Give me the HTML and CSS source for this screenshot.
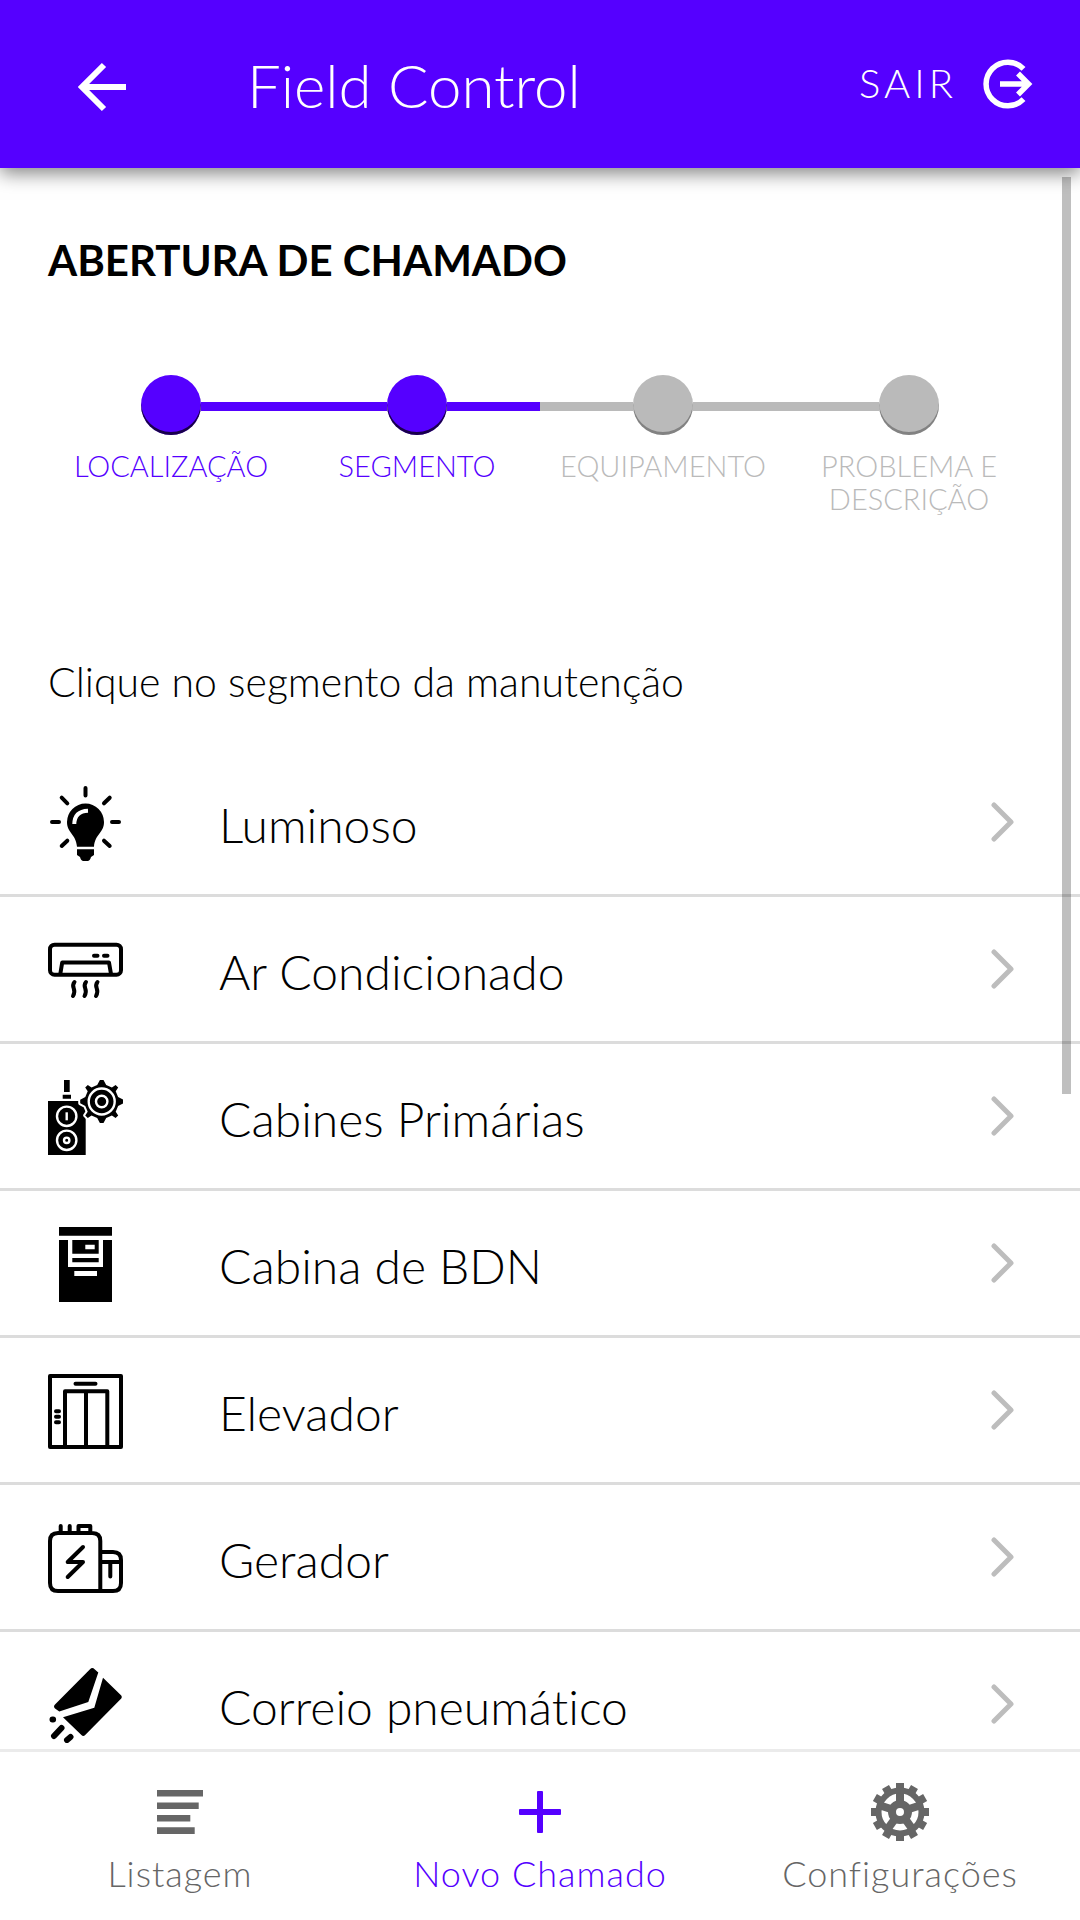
FILE: index.html
```html
<!DOCTYPE html>
<html lang="pt-BR">
<head>
<meta charset="utf-8">
<meta name="viewport" content="width=device-width, initial-scale=1">
<title>Field Control</title>
<link rel="stylesheet" href="styles.css">
</head>
<body>
<header class="topbar">
  <button class="back" type="button" aria-label="Voltar">
    <svg width="60" height="60" viewBox="0 0 60 60" fill="none" stroke="currentColor" stroke-width="6"><path d="M54 30H10M32 8L10 30l22 22"/></svg>
  </button>
  <h1 class="app-title">Field Control</h1>
  <button class="logout" type="button">
    <span>SAIR</span>
    <svg width="50" height="50" viewBox="0 0 50 50" fill="none" stroke="currentColor" stroke-width="5.5"><path d="M40.5 9.8A21.8 21.8 0 1 0 40.5 40.2M17 25H45M35 14.500L45.500 25L35 35.500"/></svg>
  </button>
</header>

<main class="content">
  <h2 class="heading">ABERTURA DE CHAMADO</h2>
  <ol class="steps">
    <li class="step done"><div class="track"><span class="line"></span><span class="dot"></span><span class="line"></span></div><span class="step-label">LOCALIZAÇÃO</span></li>
    <li class="step done"><div class="track"><span class="line"></span><span class="dot"></span><span class="line"></span></div><span class="step-label">SEGMENTO</span></li>
    <li class="step"><div class="track"><span class="line"></span><span class="dot"></span><span class="line"></span></div><span class="step-label">EQUIPAMENTO</span></li>
    <li class="step"><div class="track"><span class="line"></span><span class="dot"></span><span class="line"></span></div><span class="step-label">PROBLEMA E DESCRIÇÃO</span></li>
  </ol>
  <p class="hint">Clique no segmento da manutenção</p>

  <ul class="segments">
    <li><a class="segment" href="#luminoso">
      <svg class="seg-icon" viewBox="0 0 75 75"><path d="M37.500 2V9.500M4 36H11M64 36H71M13.700 11.700L19.300 17.300M61.700 11.700L56 17.300M19.300 54.700L13.700 60M56 54.700L61.700 60" stroke="#000" stroke-width="4" stroke-linecap="round"/><path d="M37.500 17.500A18.500 18.500 0 0 0 19 36C19 47 28 48 29 60.700H46C47 48 56 47 56 36A18.500 18.500 0 0 0 37.500 17.500ZM29 63.300H46V69L43 71Q42 75 39.500 75H35.500Q33 75 32 71L29 69Z"/><path d="M40 24.700C31 25 26.500 30 26.300 38" fill="none" stroke="#fff" stroke-width="4"/></svg>
      <span class="seg-name">Luminoso</span>
      <svg class="chevron" viewBox="0 0 24 40"><path d="M3 3L20 20L3 37"/></svg></a></li>
    <li><a class="segment" href="#ar-condicionado">
      <svg class="seg-icon" viewBox="0 0 75 75" fill="none" stroke="#000" stroke-width="4" stroke-linecap="round" stroke-linejoin="round"><rect x="2" y="11.700" width="71" height="30" rx="4.500"/><path d="M12.300 41L14.200 29.500H61L63 41M46 22.700H49.500M56 22.700H59.500M26.500 49C22 54.500 29.500 56 25 63M38 49C33.500 54.500 41 56 36.500 63M49.500 49C45 54.500 52.500 56 48 63"/></svg>
      <span class="seg-name">Ar Condicionado</span>
      <svg class="chevron" viewBox="0 0 24 40"><path d="M3 3L20 20L3 37"/></svg></a></li>
    <li><a class="segment" href="#cabines-primarias">
      <svg class="seg-icon" viewBox="0 0 75 75"><path d="M16 0H21.700V12H16ZM14.700 14.700H23V18.700H14.700ZM0 21H37.700V75H0Z"/><g fill="none" stroke="#fff" stroke-width="2.400"><circle cx="18.700" cy="36.300" r="9.700"/><circle cx="18.700" cy="60.300" r="9.700"/><circle cx="18.700" cy="60.300" r="2.700"/><path d="M18.700 32.300V40.300"/></g><g transform="translate(53.700 21.500)"><g stroke="#fff" stroke-width="4" stroke-linejoin="round"><path id="cog" d="M-1.800 -21.500H1.800L4.500 -16.400L10.200 -14L13.900 -16.500L16.500 -13.900L14 -10.200L16.400 -4.500L21.500 -1.800V1.800L16.400 4.500L14 10.200L16.500 13.900L13.900 16.500L10.200 14L4.500 16.400L1.800 21.500H-1.800L-4.500 16.400L-10.200 14L-13.900 16.500L-16.500 13.900L-14 10.200L-16.400 4.500L-21.500 1.800V-1.800L-16.400 -4.500L-14 -10.200L-16.500 -13.900L-13.900 -16.500L-10.200 -14L-4.500 -16.400Z"/></g><path d="M-1.800 -21.500H1.800L4.500 -16.400L10.200 -14L13.900 -16.500L16.500 -13.900L14 -10.200L16.400 -4.500L21.500 -1.800V1.800L16.400 4.500L14 10.200L16.500 13.900L13.900 16.500L10.200 14L4.500 16.400L1.800 21.500H-1.800L-4.500 16.400L-10.200 14L-13.900 16.500L-16.500 13.900L-14 10.200L-16.400 4.500L-21.500 1.800V-1.800L-16.400 -4.500L-14 -10.200L-16.500 -13.900L-13.900 -16.500L-10.200 -14L-4.500 -16.400Z"/><circle r="13" fill="none" stroke="#fff" stroke-width="2.400"/><circle r="5.700" fill="none" stroke="#fff" stroke-width="2.400"/></g></svg>
      <span class="seg-name">Cabines Primárias</span>
      <svg class="chevron" viewBox="0 0 24 40"><path d="M3 3L20 20L3 37"/></svg></a></li>
    <li><a class="segment" href="#cabina-bdn">
      <svg class="seg-icon" viewBox="0 0 75 75"><path fill-rule="evenodd" d="M11 0H64V8.700H11ZM11 13H20V40H55V13H64V75H11ZM26.300 44V49H49V44ZM24.300 13H50.700V26.700H24.300ZM37.300 17.700V22.300H46.700V17.700ZM24.300 31H50.700V35.300H24.300Z"/></svg>
      <span class="seg-name">Cabina de BDN</span>
      <svg class="chevron" viewBox="0 0 24 40"><path d="M3 3L20 20L3 37"/></svg></a></li>
    <li><a class="segment" href="#elevador">
      <svg class="seg-icon" viewBox="0 0 75 75" fill="none" stroke="#000" stroke-width="4" stroke-linecap="round" stroke-linejoin="round"><path d="M2 2H73V73H2ZM17 73V17.300H59.300V73M38 17.300V73M27.500 9.700H47.500M8 37.300H11M8 42.800H11M8 48.300H11"/></svg>
      <span class="seg-name">Elevador</span>
      <svg class="chevron" viewBox="0 0 24 40"><path d="M3 3L20 20L3 37"/></svg></a></li>
    <li><a class="segment" href="#gerador">
      <svg class="seg-icon" viewBox="0 0 75 75" fill="none" stroke="#000" stroke-width="4" stroke-linecap="round" stroke-linejoin="round"><path d="M52.300 70H10Q2 70 2 62V20Q2 12 10 12H44.300Q52.300 12 52.300 20V70H65Q73 70 73 62V39Q73 31 65 31H54M54 41H73M62.300 41V55.500M35 26L19.700 41H35L19.700 56M12.700 5V11M21.700 5V11M30.500 11V5H42.300V11"/></svg>
      <span class="seg-name">Gerador</span>
      <svg class="chevron" viewBox="0 0 24 40"><path d="M3 3L20 20L3 37"/></svg></a></li>
    <li><a class="segment" href="#correio-pneumatico">
      <svg class="seg-icon" viewBox="0 0 75 75"><path d="M42 1.200Q44.300 -1 46.600 1.200L50.300 4.500L40.300 34L11.300 43.500L7 40.500Q5 38.600 7 36.600ZM55 9.700L73 27.300Q74.500 29 73 30.800L37.200 67Q35.300 69 33.400 67L15 49.300L46.300 39.700Z"/><path d="M4.500 51.500h.6M13.500 60L6 68M22.500 69L19 72" stroke="#000" stroke-width="6" stroke-linecap="round"/></svg>
      <span class="seg-name">Correio pneumático</span>
      <svg class="chevron" viewBox="0 0 24 40"><path d="M3 3L20 20L3 37"/></svg></a></li>
  </ul>
  <div class="scroll-thumb"></div>
</main>

<nav class="tabs">
  <a class="tab" href="#listagem">
    <svg class="tab-icon" viewBox="0 0 60 60" fill="currentColor"><path d="M7 8H53V14.500H7ZM7 20.500H48.700V27H7ZM7 33H40.300V39.500H7ZM7 45.300H44.700V52H7Z"/></svg>
    <span>Listagem</span></a>
  <a class="tab active" href="#novo-chamado" aria-current="page">
    <svg class="tab-icon" viewBox="0 0 60 60" fill="currentColor"><rect x="9" y="27" width="42" height="6" rx="1"/><rect x="27" y="9" width="6" height="42" rx="1"/></svg>
    <span>Novo Chamado</span></a>
  <a class="tab" href="#configuracoes">
    <svg class="tab-icon" viewBox="0 0 60 60" fill="none" stroke="currentColor"><g transform="translate(30 30)"><g stroke-width="8"><path id="teeth" d="M0 -29V-20M0 29V20"/><use href="#teeth" transform="rotate(30)"/><use href="#teeth" transform="rotate(60)"/><use href="#teeth" transform="rotate(90)"/><use href="#teeth" transform="rotate(120)"/><use href="#teeth" transform="rotate(150)"/><path id="spoke" d="M0 -20V-8"/><use href="#spoke" transform="rotate(72)"/><use href="#spoke" transform="rotate(144)"/><use href="#spoke" transform="rotate(216)"/><use href="#spoke" transform="rotate(288)"/><circle r="8"/></g><circle r="21.500" stroke-width="6"/></g></svg>
    <span>Configurações</span></a>
</nav>
</body>
</html>
```
FILE: styles.css
```css
* { box-sizing: border-box; }

body {
  margin: 0;
  height: 100vh;
  display: flex;
  flex-direction: column;
  font-family: Lato, "Liberation Sans", sans-serif;
  font-weight: 300;
  color: #000;
  background: #fff;
}

button {
  border: 0;
  padding: 0;
  background: none;
  color: inherit;
  font: inherit;
}

a { color: inherit; text-decoration: none; }
ul, ol { list-style: none; margin: 0; padding: 0; }

.topbar {
  flex: none;
  height: 168px;
  display: flex;
  align-items: center;
  padding: 0 47px 0 72px;
  background: #5500ff;
  color: #fff;
  box-shadow: 0 5px 18px rgba(0, 0, 0, .5);
  position: relative;
  z-index: 1;
}

.back { display: flex; padding-top: 6px; }

.app-title {
  flex: 1;
  margin: 0;
  padding: 2px 0 0 115px;
  font-size: 60px;
  line-height: 72px;
  font-weight: 300;
}

.logout {
  display: flex;
  align-items: center;
  gap: 26px;
  font-size: 40px;
  line-height: 48px;
  letter-spacing: 4px;
}

.logout span { padding-bottom: 2px; }

.content {
  flex: 1;
  min-height: 0;
  overflow: hidden;
  position: relative;
}

.heading {
  margin: 0;
  padding: 65px 48px 0;
  font-size: 42px;
  line-height: 54px;
  font-weight: 700;
}

.steps {
  display: grid;
  grid-template-columns: repeat(4, minmax(0, 1fr));
  min-height: 204px;
  margin: 88px 48px 0;
}

.step { color: #bababa; text-align: center; }
.done { color: #5500ff; }
.track { display: flex; align-items: center; height: 63px; }
.line { flex: 1; height: 9px; background: currentColor; }
.step:first-child .line:first-child,
.step:last-child .line:last-child { background: none; }

.dot {
  align-self: flex-start;
  width: 60px;
  height: 60px;
  border-radius: 50%;
  background: currentColor;
  box-shadow: inset 0 -3px 0 rgba(0, 0, 0, .3);
}
.done .dot { box-shadow: inset 0 -3px 0 rgba(0, 0, 0, .7); }

.step-label {
  display: block;
  padding: 11px 12px 0;
  font-size: 29px;
  line-height: 33px;
}

.hint {
  margin: 0;
  padding: 76px 48px 41px;
  font-size: 41px;
  line-height: 54px;
}

.segment {
  display: flex;
  align-items: center;
  height: 147px;
  padding: 0 65px 0 48px;
  border-bottom: 3px solid #dcdcdc;
}

.seg-icon { flex: none; width: 75px; height: 75px; margin-top: 2px; }

.seg-name {
  flex: 1;
  padding: 5px 0 0 96px;
  font-size: 48px;
  line-height: 60px;
  font-variant-ligatures: none;
}

.chevron {
  width: 24px;
  height: 40px;
  fill: none;
  stroke: #bdbdbd;
  stroke-width: 5;
  stroke-linecap: round;
  stroke-linejoin: round;
}

.scroll-thumb {
  position: absolute;
  top: 9px;
  right: 9px;
  width: 9px;
  height: 58%;
  background: rgba(0, 0, 0, .25);
}

.tabs {
  flex: none;
  display: grid;
  grid-template-columns: repeat(3, 1fr);
  height: 171px;
  padding-top: 30px;
  border-top: 3px solid #ebebeb;
  color: #666;
  font-size: 36px;
  line-height: 42px;
  letter-spacing: 1px;
}

.tab { display: flex; flex-direction: column; align-items: center; gap: 10px; }
.active { color: #5500ff; }
.tab-icon { width: 60px; height: 60px; }
```
